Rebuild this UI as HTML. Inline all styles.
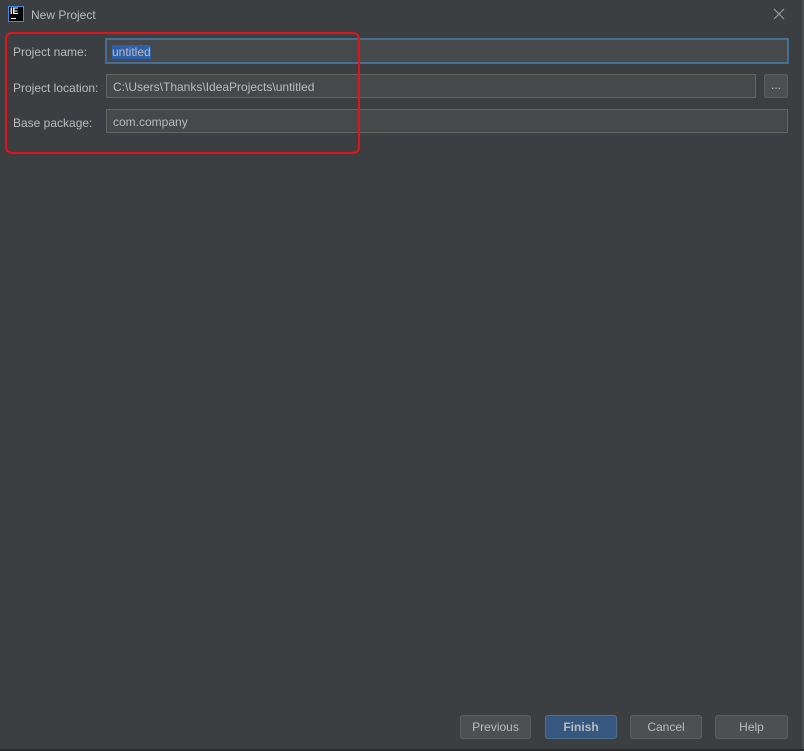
<!DOCTYPE html>
<html><head><style>
body{margin:0;width:804px;height:751px;background:#3c3f41;font-family:"Liberation Sans",sans-serif;font-size:12px;color:#bbbbbb;position:relative;overflow:hidden}
.a{position:absolute}
.f{position:absolute;background:#45494a;border:1px solid #646464;box-sizing:border-box;padding-left:6px;padding-top:2px;line-height:20px;color:#bbbbbb}
.b{position:absolute;top:715px;height:24px;width:72px;box-sizing:border-box;border:1px solid #5e6060;border-radius:3px;background:#4c5052;text-align:center;line-height:23px;color:#bbbbbb}
</style></head><body>
<div class="a" style="left:8px;top:6px;width:16px;height:16px;background:#000;border:1px solid #3d8ee0;box-sizing:border-box"></div>
<div class="a" style="left:10px;top:6px;color:#fff;font-weight:bold;font-size:9px">IE</div>
<div class="a" style="left:11px;top:18px;width:5px;height:1px;background:#fff"></div>
<div class="a" style="left:31px;top:8px;font-size:12px">New Project</div>
<svg class="a" style="left:773px;top:8px" width="12" height="12"><path d="M1 1L11 11M11 1L1 11" stroke="#9a9a9a" stroke-width="1.2"/></svg>
<div class="a" style="left:13px;top:45px">Project name:</div>
<div class="a" style="left:13px;top:81px">Project location:</div>
<div class="a" style="left:13px;top:116px">Base package:</div>
<div class="f" style="left:105px;top:38px;width:684px;height:26px;border:2px solid #466d94;line-height:20px;padding-left:5px"><span style="background:#2f5fa8;color:#bbbbbb">untitled</span></div>
<div class="f" style="left:106px;top:74px;width:650px;height:24px">C:\Users\Thanks\IdeaProjects\untitled</div>
<div class="a" style="left:764px;top:74px;width:24px;height:24px;box-sizing:border-box;border:1px solid #5e6060;border-radius:3px;background:#4c5052;text-align:center;line-height:20px">...</div>
<div class="f" style="left:106px;top:109px;width:682px;height:24px">com.company</div>
<div class="a" style="left:5px;top:32px;width:355px;height:122px;box-sizing:border-box;border:2px solid #e0141a;border-radius:7px"></div>
<div class="b" style="left:460px;width:71px">Previous</div>
<div class="b" style="left:545px;background:#365880;border-color:#4c708c;font-weight:bold">Finish</div>
<div class="b" style="left:630px">Cancel</div>
<div class="b" style="left:715px;width:73px">Help</div>
<div class="a" style="left:802px;top:0;width:2px;height:751px;background:#4a4d4f"></div>
<div class="a" style="left:0;top:749px;width:804px;height:2px;background:#2b2b2b"></div>
</body></html>
